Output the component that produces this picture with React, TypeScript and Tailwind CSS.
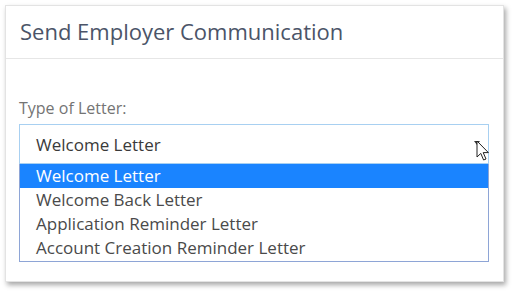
import React from 'react';

const options = [
    'Welcome Letter',
    'Welcome Back Letter',
    'Application Reminder Letter',
    'Account Creation Reminder Letter',
];

function Cursor() {
    return (
        <svg width="14" height="22" viewBox="0 0 14 22" className="absolute left-[476px] top-[140px]">
            <path d="M1 1 L1 17 L4.8 13.4 L7.6 20 L10 19 L7.2 12.6 L12.4 12.6 Z" fill="#fff" stroke="#222" strokeWidth="1" strokeLinejoin="round" />
        </svg>
    );
}

export default function App() {
    const selected = 0;

    return (
        <div className="relative w-[513px] h-[291px] bg-white pt-[5px] pl-[5px]" style={{ fontFamily: '"Open Sans", "Noto Sans", sans-serif' }}>
            <div className="w-[499px] h-[277px] bg-white border border-[#e3e3e3] shadow-[2px_3px_5px_rgba(0,0,0,0.35)]">
                {/* Header */}
                <div className="h-[53px] flex items-center px-[14px] border-b border-[#e6e6e6]">
                    <h2 className="text-[22px] leading-none text-[#4b5468] pb-[3px]">Send Employer Communication</h2>
                </div>

                {/* Body */}
                <div className="px-[13px] pt-[39px]">
                    <label className="block text-[16px] leading-[20px] text-[#747474]">Type of Letter:</label>
                    <div className="mt-[6px] w-[470px]">
                        <div className="h-[40px] flex items-center justify-between border border-[#a8d0f1] pl-[16px] pr-[8px]">
                            <span className="text-[17px] text-[#3a3a3a] pt-[1px]">{options[selected]}</span>
                            <span className="w-0 h-0 border-l-[3px] border-r-[3px] border-t-[4px] border-l-transparent border-r-transparent border-t-[#333] mb-[3px]" />
                        </div>
                        <ul className="border border-t-0 border-[#8ea5d6] pb-[1px]">
                            {options.map((o, i) => (
                                <li
                                    key={o}
                                    className={`h-[24px] flex items-center pl-[16px] text-[17px] ${i === selected ? 'bg-[#1a84ff] text-white' : 'text-[#4a4a4a]'}`}
                                >
                                    {o}
                                </li>
                            ))}
                        </ul>
                    </div>
                </div>
            </div>
            <Cursor />
        </div>
    );
}
